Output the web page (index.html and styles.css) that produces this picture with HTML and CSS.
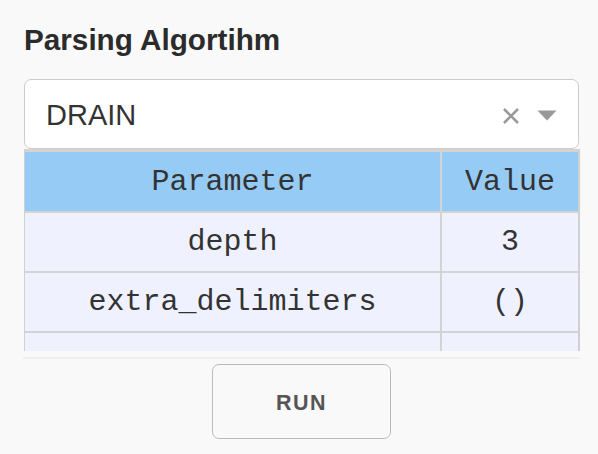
FILE: index.html
```html
<!DOCTYPE html>
<html>
<head>
<meta charset="utf-8">
<link rel="stylesheet" href="styles.css">
</head>
<body>
<div class="panel">
  <h2 class="title">Parsing Algortihm</h2>
  <div class="select">
    <span class="select-value">DRAIN</span>
    <span class="select-icons">
      <svg class="clear" width="18" height="18" viewBox="0 0 18 18"><path d="M2 2 L16 16 M16 2 L2 16" stroke="#999" stroke-width="2.6" fill="none"/></svg>
      <svg class="caret" width="20" height="11" viewBox="0 0 20 11"><path d="M0.5 0.5 H19.5 L10 10.5 Z" fill="#999"/></svg>
    </span>
  </div>
  <div class="table-wrap">
    <table class="params">
      <thead>
        <tr><th class="col-name">Parameter</th><th class="col-value">Value</th></tr>
      </thead>
      <tbody>
        <tr><td>depth</td><td>3</td></tr>
        <tr><td>extra_delimiters</td><td>()</td></tr>
        <tr><td></td><td></td></tr>
      </tbody>
    </table>
  </div>
  <div class="divider"></div>
  <div class="actions">
    <button class="run">RUN</button>
  </div>
</div>
</body>
</html>
```
FILE: styles.css
```css
html, body {
  margin: 0;
  padding: 0;
  background: #f9f9f9;
}
.panel {
  width: 556px;
  padding: 23px 0 0 24px;
  font-family: "Liberation Sans", Arial, sans-serif;
}
.title {
  margin: 0 0 22px 0;
  font-size: 29.7px;
  line-height: 34px;
  font-weight: bold;
  color: #2b2b2b;
}
.select {
  box-sizing: border-box;
  width: 555px;
  height: 70px;
  background: #fff;
  border: 1.5px solid #cccccc;
  border-radius: 7px;
  display: flex;
  align-items: center;
  justify-content: space-between;
  padding: 3px 21px 0 21px;
}
.select-value {
  font-size: 29px;
  color: #333;
}
.select-icons {
  display: flex;
  align-items: center;
  gap: 17px;
}
.table-wrap {
  box-sizing: border-box;
  width: 556px;
  height: 202px;
  overflow: hidden;
  border-left: 1px solid #d0d0d0;
  border-right: 2px solid #d0d0d0;
  border-top: 3px solid #d3d3d3;
}
.params {
  width: 100%;
  border-collapse: collapse;
  font-family: "Liberation Mono", "Courier New", monospace;
  font-size: 30px;
  color: #333;
}
.params th, .params td {
  text-align: center;
  font-weight: normal;
  padding: 0;
}
.params th {
  background: #96cbf5;
  height: 59px;
}
.params td {
  background: #eff2fe;
  height: 58px;
  border-top: 2px solid #d3d3d3;
}
.col-name {
  width: 415px;
}
.params th + th, .params td + td {
  border-left: 2px solid #d3d3d3;
}
.divider {
  width: 557px;
  margin-left: -1px;
  height: 2px;
  background: #efefef;
  margin-top: 6px;
}
.actions {
  display: flex;
  justify-content: center;
  padding-top: 5px;
  width: 556px;
}
.run {
  width: 179px;
  height: 75px;
  margin-left: -1px;
  background: transparent;
  border: 1.5px solid #bbbbbb;
  border-radius: 7px;
  font-family: "Liberation Sans", Arial, sans-serif;
  font-weight: bold;
  font-size: 21.5px;
  letter-spacing: 1.5px;
  color: #555;
  padding: 3px 0 0 0;
}
```
